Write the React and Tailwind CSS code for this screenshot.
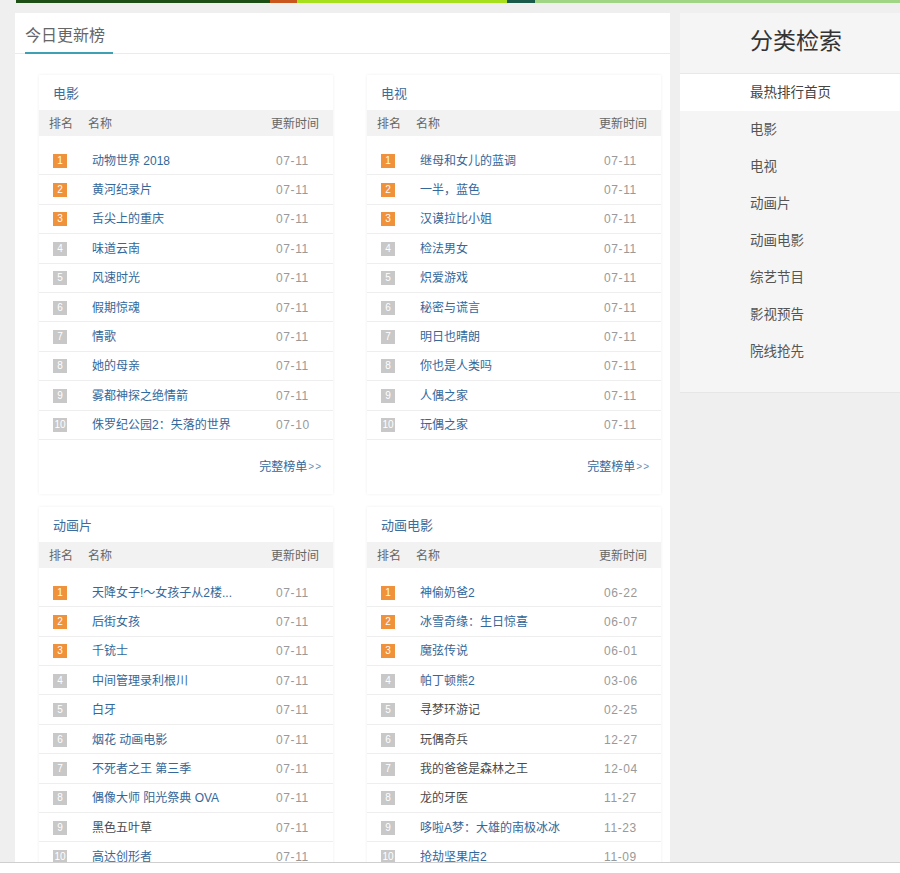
import React from "react";

const FONT = { fontFamily: '"Liberation Sans", "Noto Sans CJK SC", sans-serif' };

const sections = [
  {
    title: "电影",
    rows: [
      ["动物世界 2018", "07-11"],
      ["黄河纪录片", "07-11"],
      ["舌尖上的重庆", "07-11"],
      ["味道云南", "07-11"],
      ["风速时光", "07-11"],
      ["假期惊魂", "07-11"],
      ["情歌", "07-11"],
      ["她的母亲", "07-11"],
      ["雾都神探之绝情箭", "07-11"],
      ["侏罗纪公园2：失落的世界", "07-10"],
    ],
  },
  {
    title: "电视",
    rows: [
      ["继母和女儿的蓝调", "07-11"],
      ["一半，蓝色", "07-11"],
      ["汉谟拉比小姐", "07-11"],
      ["检法男女", "07-11"],
      ["炽爱游戏", "07-11"],
      ["秘密与谎言", "07-11"],
      ["明日也晴朗", "07-11"],
      ["你也是人类吗", "07-11"],
      ["人偶之家", "07-11"],
      ["玩偶之家", "07-11"],
    ],
  },
  {
    title: "动画片",
    rows: [
      ["天降女子!～女孩子从2楼...", "07-11"],
      ["后街女孩", "07-11"],
      ["千铳士", "07-11"],
      ["中间管理录利根川", "07-11"],
      ["白牙", "07-11"],
      ["烟花 动画电影", "07-11"],
      ["不死者之王 第三季", "07-11"],
      ["偶像大师 阳光祭典 OVA", "07-11"],
      ["黑色五叶草", "07-11", true],
      ["高达创形者", "07-11"],
    ],
  },
  {
    title: "动画电影",
    rows: [
      ["神偷奶爸2", "06-22"],
      ["冰雪奇缘：生日惊喜", "06-07"],
      ["魔弦传说", "06-01"],
      ["帕丁顿熊2", "03-06"],
      ["寻梦环游记", "02-25", true],
      ["玩偶奇兵", "12-27", true],
      ["我的爸爸是森林之王", "12-04", true],
      ["龙的牙医", "11-27", true],
      ["哆啦A梦：大雄的南极冰冰", "11-23"],
      ["抢劫坚果店2", "11-09"],
    ],
  },
];

function Card({ section }) {
  return (
    <div className="bg-white shadow-[0_0_3px_rgba(0,0,0,0.07)]">
      <div className="h-[35px] pl-[14px] pt-[2px] flex items-center text-[13px] text-[#3b6c9c]">
        {section.title}
      </div>
      <div className="h-[26px] bg-[#f2f2f2] flex items-center pt-[2px] pl-[10px] pr-[14px] text-[12px] text-[#666]">
        <span className="w-[39px]">排名</span>
        <span className="flex-1">名称</span>
        <span>更新时间</span>
      </div>
      <div className="mt-[10px]">
        {section.rows.map(([name, date, dark], i) => (
          <div
            key={i}
            className="h-[29.4px] border-b border-[#eeeeee] flex items-center pt-[1px] text-[12px]"
          >
            <span
              className={
                "ml-[14px] w-[14px] h-[14px] flex items-center justify-center text-[10px] leading-none text-white " +
                (i < 3 ? "bg-[#f0923b]" : "bg-[#c8c8c8]")
              }
            >
              {i + 1}
            </span>
            <span
              className={
                "ml-[25px] w-[184px] pr-[8px] whitespace-nowrap overflow-hidden " +
                (dark ? "text-[#4a4a4a]" : "text-[#34679a]")
              }
            >
              {name}
            </span>
            <span className="text-[#999] tracking-[0.6px]">{date}</span>
          </div>
        ))}
      </div>
      <div className="h-[54px] flex items-center justify-end pr-[11px] text-[12px] text-[#34679a]">
        完整榜单<span className="tracking-[1px] text-[10px] text-[#6a8fb5] ml-[1px]">&gt;&gt;</span>
      </div>
    </div>
  );
}

export default function App() {
  const side = ["电影", "电视", "动画片", "动画电影", "综艺节目", "影视预告", "院线抢先"];
  return (
    <div className="min-h-screen bg-[#efefef] pb-[20px]" style={FONT}>
      <div className="h-[3px] flex">
        <div className="w-[16px]" />
        <div className="w-[254px] bg-[#1d4e15]" />
        <div className="w-[27px] bg-[#c9561c]" />
        <div className="w-[210px] bg-[#a6df1c]" />
        <div className="w-[28px] bg-[#1a5a4a]" />
        <div className="flex-1 bg-[#9fd585]" />
      </div>
      <div className="mt-[10px] flex items-start">
        <div className="ml-[15px] w-[655px] bg-white pb-[40px]">
          <div className="px-[10px] flex items-end border-b border-[#ebebeb] h-[41px]">
            <div className="w-[88px] pb-[6px] leading-[20px] text-[16px] text-[#666] border-b-2 border-[#3f9fb5] -mb-px">
              今日更新榜
            </div>
          </div>
          <div className="pl-[24px] pt-[21px] grid grid-cols-[294px_294px] gap-x-[34px] gap-y-[13px]">
            {sections.map((s) => (
              <Card key={s.title} section={s} />
            ))}
          </div>
        </div>
        <div className="ml-[10px] w-[220px] bg-[#f5f5f5] border-b border-[#e6e6e6] pb-[22px]">
          <div className="h-[61px] pl-[70px] pb-[4px] flex items-center text-[23px] text-[#333] border-b border-[#e8e8e8]">
            分类检索
          </div>
          <div className="h-[37px] pl-[70px] pt-[2px] flex items-center bg-white text-[13.5px] text-[#444]">
            最热排行首页
          </div>
          {side.map((s) => (
            <div key={s} className="h-[37px] pl-[70px] pt-[2px] flex items-center text-[13.5px] text-[#555]">
              {s}
            </div>
          ))}
        </div>
      </div>
      <div className="fixed bottom-0 left-0 right-0 h-[11px] bg-white border-t border-[#cfcfcf]" />
    </div>
  );
}
